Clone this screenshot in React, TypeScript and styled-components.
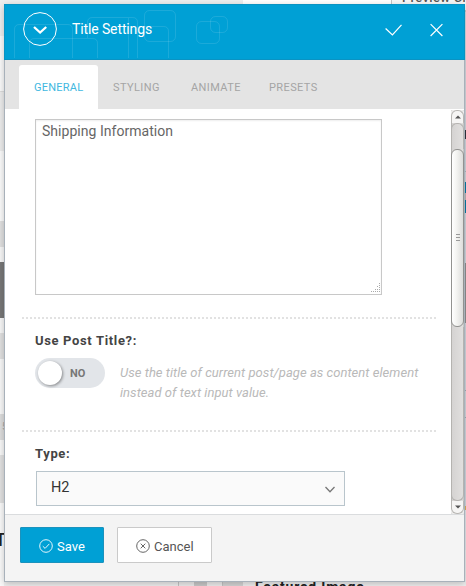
import React from 'react';
import styled, { createGlobalStyle } from 'styled-components';

const GlobalStyle = createGlobalStyle`
  * { box-sizing: border-box; }
  body { margin: 0; overflow: hidden; font-family: Roboto, "Liberation Sans", sans-serif; }
`;

const Page = styled.div`
  position: relative;
  width: 466px;
  height: 586px;
  padding: 4px 1px 4px 4px;
  overflow: hidden;
  background: #f3f3f3;
`;

/* Page behind the dialog: only its margins stay visible. */
const Backdrop = styled.div`
  position: absolute;
  inset: 0;
  display: grid;
  grid-template: 4px 578px 4px / 4px 461px 1px;
`;
const Strip = styled.div`
  grid-row: 1 / 4;
  overflow: hidden;
`;
const LeftStrip = styled(Strip)`grid-column: 1;`;
const RightStrip = styled(Strip)`grid-column: 3;`;
const Segment = styled.div<{ $h: number; $c: string }>`
  height: ${p => p.$h}px;
  background: ${p => p.$c};
  overflow: hidden;
  white-space: nowrap;
`;
const EdgeRow = styled.div<{ $row: number }>`
  grid-row: ${p => p.$row};
  grid-column: 2;
  display: flex;
  overflow: hidden;
`;
const EdgeCell = styled.div<{ $w: number; $c: string; $line?: boolean }>`
  flex: none;
  width: ${p => p.$w}px;
  height: 4px;
  background: ${p => p.$c};
  border-left: ${p => (p.$line ? '1px solid #c4c4c4' : '0')};
  overflow: hidden;
  white-space: nowrap;
`;
const PreviewText = styled.span`
  display: block;
  margin: -9px 0 0 10px;
  font-size: 13px;
  line-height: 14px;
  font-weight: 500;
  letter-spacing: 0.3px;
  color: #555;
`;
const FeaturedText = styled.span`
  display: block;
  padding-left: 12px;
  margin-top: -3px;
  font-size: 14px;
  line-height: 16px;
  font-weight: 700;
  letter-spacing: 0.8px;
  color: #222;
`;
const HeadingText = styled.span<{ $size: number; $color: string; $x: number }>`
  display: block;
  margin-left: ${p => p.$x}px;
  font-size: ${p => p.$size}px;
  line-height: 26px;
  font-weight: 500;
  color: ${p => p.$color};
`;

const Dialog = styled.section`
  position: relative;
  display: flex;
  flex-direction: column;
  width: 461px;
  height: 578px;
  border: 1px solid #a8b1ba;
  border-top: 0;
  background: #fff;
  box-shadow: 0 2px 7px rgba(0, 0, 0, 0.22);
`;

const Header = styled.header`
  position: relative;
  flex: none;
  display: flex;
  align-items: flex-start;
  height: 56px;
  margin: 0 -1px;
  border: 1px solid #0a93c3;
  background: #00a0d5;
  color: #fff;
`;
const HeaderPattern = styled.svg`
  position: absolute;
  left: -1px;
  top: -1px;
`;
const CollapseButton = styled.button`
  position: relative;
  width: 34px;
  height: 34px;
  margin: 7px 0 0 18px;
  padding: 0;
  border: 0;
  background: none;
  svg { display: block; }
`;
const Title = styled.h1`
  position: relative;
  margin: 14px auto 0 15px;
  font-size: 14px;
  line-height: 20px;
  font-weight: 400;
  letter-spacing: -0.12px;
  white-space: nowrap;
`;
const HeaderActions = styled.div`
  display: flex;
  gap: 28px;
  margin: 18px 21px 0 0;
`;

const Tabs = styled.nav`
  flex: none;
  display: flex;
  align-items: flex-end;
  height: 49px;
  padding-left: 14px;
  background: #e4e4e4;
`;
const Tab = styled.button<{ $active?: boolean; $w: number }>`
  width: ${p => p.$w}px;
  height: 44px;
  padding: 1px 0 0 15px;
  border: 0;
  border-radius: 3px 3px 0 0;
  background: ${p => (p.$active ? '#fff' : 'transparent')};
  color: ${p => (p.$active ? '#3fb8df' : '#a5a5a5')};
  font: 400 11px/44px Roboto, sans-serif;
  letter-spacing: ${p => (p.$active ? 0.25 : 0.4)}px;
  text-align: left;
`;

const Body = styled.div`
  flex: none;
  display: flex;
  justify-content: space-between;
  height: 405px;
  overflow: hidden;
`;
const Form = styled.div`
  width: 414px;
  margin-left: 17px;
`;
const TextArea = styled.textarea`
  display: block;
  width: 347px;
  height: 176px;
  margin: 10px 0 22px 13px;
  padding: 3px 6px;
  border: 1px solid #c8c8c8;
  border-radius: 0;
  outline: 0;
  resize: none;
  color: #666;
  font: 400 14px/17px Roboto, sans-serif;
  letter-spacing: 0.03px;
  box-shadow: inset 0 1px 2px rgba(0, 0, 0, 0.07);
`;
const AreaWrap = styled.div`position: relative;`;
const Grip = styled.svg`
  position: absolute;
  left: 349px;
  top: 164px;
`;
const Divider = styled.div`
  height: 2px;
  background: repeating-linear-gradient(90deg, #e2e2e2 0 2px, #fff 2px 4px);
`;
const Field = styled.div<{ $h?: number }>`
  height: ${p => (p.$h ? `${p.$h}px` : 'auto')};
  padding: 13px 0 0 13px;
`;
const Label = styled.div`
  font-size: 13px;
  line-height: 18px;
  font-weight: 700;
  letter-spacing: 0.65px;
  color: #444;
`;
const ToggleRow = styled.div`
  display: flex;
  gap: 16px;
  margin-top: 8px;
`;
const Toggle = styled.div`
  flex: none;
  display: flex;
  align-items: center;
  gap: 8px;
  width: 70px;
  height: 30px;
  padding-left: 3px;
  border-radius: 15px;
  background: #e2e5e9;
  color: #777;
  font-size: 11px;
  font-weight: 700;
`;
const Knob = styled.span`
  width: 24px;
  height: 24px;
  border-radius: 50%;
  background: #fff;
  box-shadow: 1px 1px 3px rgba(0, 0, 0, 0.4);
`;
const Help = styled.p`
  margin: 5px 0 0 -1px;
  font-size: 13px;
  line-height: 20px;
  letter-spacing: 0.04px;
  font-style: italic;
  color: #b9b9b9;
  white-space: nowrap;
`;
const Select = styled.div`
  display: flex;
  align-items: center;
  justify-content: space-between;
  width: 309px;
  height: 35px;
  margin: 8px 0 0 1px;
  padding: 0 8px 2px 14px;
  border: 1px solid #b9c5cc;
  background: #fafafa;
  color: #333;
  font-size: 14.5px;
  svg { margin-top: 5px; }
`;

const Scrollbar = styled.div`
  display: flex;
  flex-direction: column;
  width: 13px;
  height: 404px;
  margin-top: 1px;
  background: linear-gradient(90deg, #d4d2d1, #e1dfde);
  border-left: 1px solid #b5b4b2;
  border-right: 1px solid #c6c6c4;
`;
const Arrow = styled.div<{ $down?: boolean }>`
  flex: none;
  display: flex;
  justify-content: center;
  align-items: center;
  height: 13px;
  margin: 0 -1px;
  border: 1px solid #b8b6b3;
  border-width: ${p => (p.$down ? '0 1px 1px' : '1px 1px 0')};
  border-radius: ${p => (p.$down ? '0 0 6px 6px' : '6px 6px 0 0')};
  background: #f6f5f4;
  box-shadow: 0 0 0 2px #eeedec;
  clip-path: inset(0);
`;
const Track = styled.div<{ $h: number; $end?: boolean }>`
  flex: none;
  height: ${p => p.$h}px;
  margin: 0 -1px;
  border: 1px solid #b5b3b0;
  border-width: ${p => (p.$end ? '0 1px 1px' : '1px 1px 0')};
  border-radius: ${p => (p.$end ? '0 0 6px 6px' : '6px 6px 0 0')};
  background: linear-gradient(90deg, #d5d3d2, #e1dfde);
`;
const Thumb = styled.div`
  flex: none;
  display: flex;
  align-items: center;
  justify-content: center;
  height: 178px;
  margin: 0 -1px;
  border: 1px solid #929290;
  border-radius: 6px;
  background: linear-gradient(90deg, #fff, #f4f4f2 40%, #dddddb);
`;

const Footer = styled.footer`
  flex: 1;
  display: flex;
  gap: 13px;
  padding: 12px 0 0 15px;
  border-top: 1px solid #dadcde;
  background: #f4f4f4;
`;
const Button = styled.button<{ $primary?: boolean }>`
  display: flex;
  align-items: center;
  gap: 4px;
  width: ${p => (p.$primary ? 84 : 95)}px;
  height: 36px;
  padding: 3px 0 0 18px;
  border: 1px solid ${p => (p.$primary ? '#1b92bd' : '#cacaca')};
  border-radius: 1px;
  background: ${p => (p.$primary ? '#00a0d5' : '#fff')};
  color: ${p => (p.$primary ? '#fff' : '#555')};
  font: 400 13px/18px Roboto, sans-serif;
  svg { flex: none; margin-top: -2px; }
`;

const leftSegments: [number, string][] = [
  [36, '#eeeeee'], [55, '#fafafa'], [1, '#dddddd'], [59, '#ececec'], [70, '#fbfbfb'],
  [26, '#e0e0e0'], [15, '#f7f7f7'], [56, '#777777'], [15, '#f7f7f7'], [26, '#e0e0e0'],
  [55, '#f8f8f8'],
];
const rightSegments: [number, string][] = [
  [10, '#f3f3f3'], [2, '#c4c4c4'], [118, '#d6dadf'], [9, '#30343f'], [32, '#d6dadf'],
  [1, '#b0b8c0'], [10, '#d6dadf'], [11, '#077aa5'], [7, '#c3b5b5'], [13, '#077aa5'],
  [50, '#d6dadf'], [60, '#929292'], [67, '#d6dadf'], [1, '#a5adb5'], [26, '#d6dadf'],
  [1, '#a5adb5'], [88, '#d6dadf'], [4, '#deb25e'], [40, '#e5e8eb'], [36, '#eeeeee'],
];

export default function App() {
  return (
    <Page>
      <GlobalStyle />
      <Backdrop>
        <LeftStrip>
          {leftSegments.map(([h, c], i) => <Segment key={i} $h={h} $c={c} />)}
          <Segment $h={26} $c="#dddddd"><HeadingText $size={11} $x={2} $color="#aaa">5</HeadingText></Segment>
          <Segment $h={15} $c="#f8f8f8" />
          <Segment $h={48} $c="#e1e1e1" />
          <Segment $h={24} $c="#fafafa" />
          <Segment $h={59} $c="#fafafa"><HeadingText $size={18} $x={-5} $color="#222">T</HeadingText></Segment>
        </LeftStrip>
        <EdgeRow $row={1}>
          <EdgeCell $w={239} $c="#eeeeee" />
          <EdgeCell $w={148} $c="#fff" />
          <EdgeCell $w={74} $c="#f8f8f8" $line><PreviewText>Preview Changes</PreviewText></EdgeCell>
        </EdgeRow>
        <EdgeRow $row={3}>
          <EdgeCell $w={174} $c="#f0f0f0" />
          <EdgeCell $w={16} $c="#eeeeee" $line />
          <EdgeCell $w={13} $c="#c9c9c9" />
          <EdgeCell $w={15} $c="#eeeeee" />
          <EdgeCell $w={21} $c="#d5d5d5" $line />
          <EdgeCell $w={222} $c="#f0f0f0"><FeaturedText>Featured Image</FeaturedText></EdgeCell>
        </EdgeRow>
        <RightStrip>
          {rightSegments.map(([h, c], i) => <Segment key={i} $h={h} $c={c} />)}
        </RightStrip>
      </Backdrop>

      <Dialog>
        <Header>
          <HeaderPattern width="461" height="56" fill="none" stroke="#fff" strokeOpacity="0.11">
            <path d="M10.500 54V25.500Q10.500 20.500 15.500 20.500H63.500Q68.500 20.500 68.500 25.500V54" />
            <path d="M25.500 54V39.500Q25.500 34.500 30.500 34.500H88.500Q93.500 34.500 93.500 39.500V54" />
            <path d="M83.500 34V18.500Q83.500 13.500 88.500 13.500H128.500Q133.500 13.500 133.500 18.500V54M124.500 54V14" />
            <path d="M140 22.500H159.500Q164.500 22.500 164.500 27.500V54" />
            <rect x="140.500" y="6.500" width="31" height="31" rx="5" />
            <rect x="192.500" y="17.500" width="23" height="22" rx="5" />
            <rect x="206.500" y="12.500" width="17" height="16" rx="5" />
          </HeaderPattern>
          <CollapseButton aria-label="Collapse">
            <svg width="34" height="34" fill="none" stroke="#fff">
              <circle cx="17" cy="17" r="16.400" strokeWidth="1" />
              <path d="M11 15L17.100 20.500L23.200 15" strokeWidth="2.300" />
            </svg>
          </CollapseButton>
          <Title>Title Settings</Title>
          <HeaderActions>
            <svg width="17" height="14" fill="none" stroke="#fff" strokeWidth="1.200"><path d="M.6 5.500L7.400 12L16.500 1.800" /></svg>
            <svg width="13" height="14" fill="none" stroke="#fff" strokeWidth="1.200"><path d="M.6 1.200L12.400 13M12.400 1.200L.6 13" /></svg>
          </HeaderActions>
        </Header>

        <Tabs>
          <Tab $active $w={79}>GENERAL</Tab>
          <Tab $w={78}>STYLING</Tab>
          <Tab $w={78}>ANIMATE</Tab>
          <Tab $w={78}>PRESETS</Tab>
        </Tabs>

        <Body>
          <Form>
            <AreaWrap>
              <TextArea readOnly value="Shipping Information" />
              <Grip width="10" height="10" fill="#aaa">
                <path d="M8 0h1v1h-1zM8 2h1v1h-1zM8 4h1v1h-1zM8 6h1v1h-1zM8 8h1v1h-1zM6 3h1v1h-1zM6 6h1v1h-1zM6 8h1v1h-1zM4 6h1v1h-1zM4 8h1v1h-1zM2 8h1v1h-1zM0 8h1v1h-1z" />
              </Grip>
            </AreaWrap>
            <Divider />
            <Field $h={111}>
              <Label>Use Post Title?:</Label>
              <ToggleRow>
                <Toggle role="switch" aria-checked="false"><Knob />NO</Toggle>
                <Help>Use the title of current post/page as content element<br />instead of text input value.</Help>
              </ToggleRow>
            </Field>
            <Divider />
            <Field>
              <Label>Type:</Label>
              <Select>
                H2
                <svg width="12" height="8" fill="none" stroke="#777" strokeWidth="1.300"><path d="M1.500 1L6 5.800L10.500 1" /></svg>
              </Select>
            </Field>
          </Form>
          <Scrollbar>
            <Arrow><svg width="6" height="4"><path d="M0 3.500L3 .5L6 3.500Z" fill="#555" /></svg></Arrow>
            <Track $h={26} />
            <Thumb>
              <svg width="4" height="8" fill="none" stroke="#999"><path d="M0 .5H4M0 3.500H4M0 6.500H4" /></svg>
            </Thumb>
            <Track $h={174} $end />
            <Arrow $down><svg width="6" height="4"><path d="M0 .5L3 3.500L6 .5Z" fill="#555" /></svg></Arrow>
          </Scrollbar>
        </Body>

        <Footer>
          <Button $primary>
            <svg width="14" height="14" fill="none" stroke="#fff" strokeWidth=".9"><circle cx="7" cy="7" r="6.300" /><path d="M3.800 7.200L6.100 9.400L10.300 4.900" /></svg>
            Save
          </Button>
          <Button>
            <svg width="14" height="14" fill="none" stroke="#555" strokeWidth=".9"><circle cx="7" cy="7" r="6.300" /><path d="M4.700 4.700L9.300 9.300M9.300 4.700L4.700 9.300" /></svg>
            Cancel
          </Button>
        </Footer>
      </Dialog>
    </Page>
  );
}
